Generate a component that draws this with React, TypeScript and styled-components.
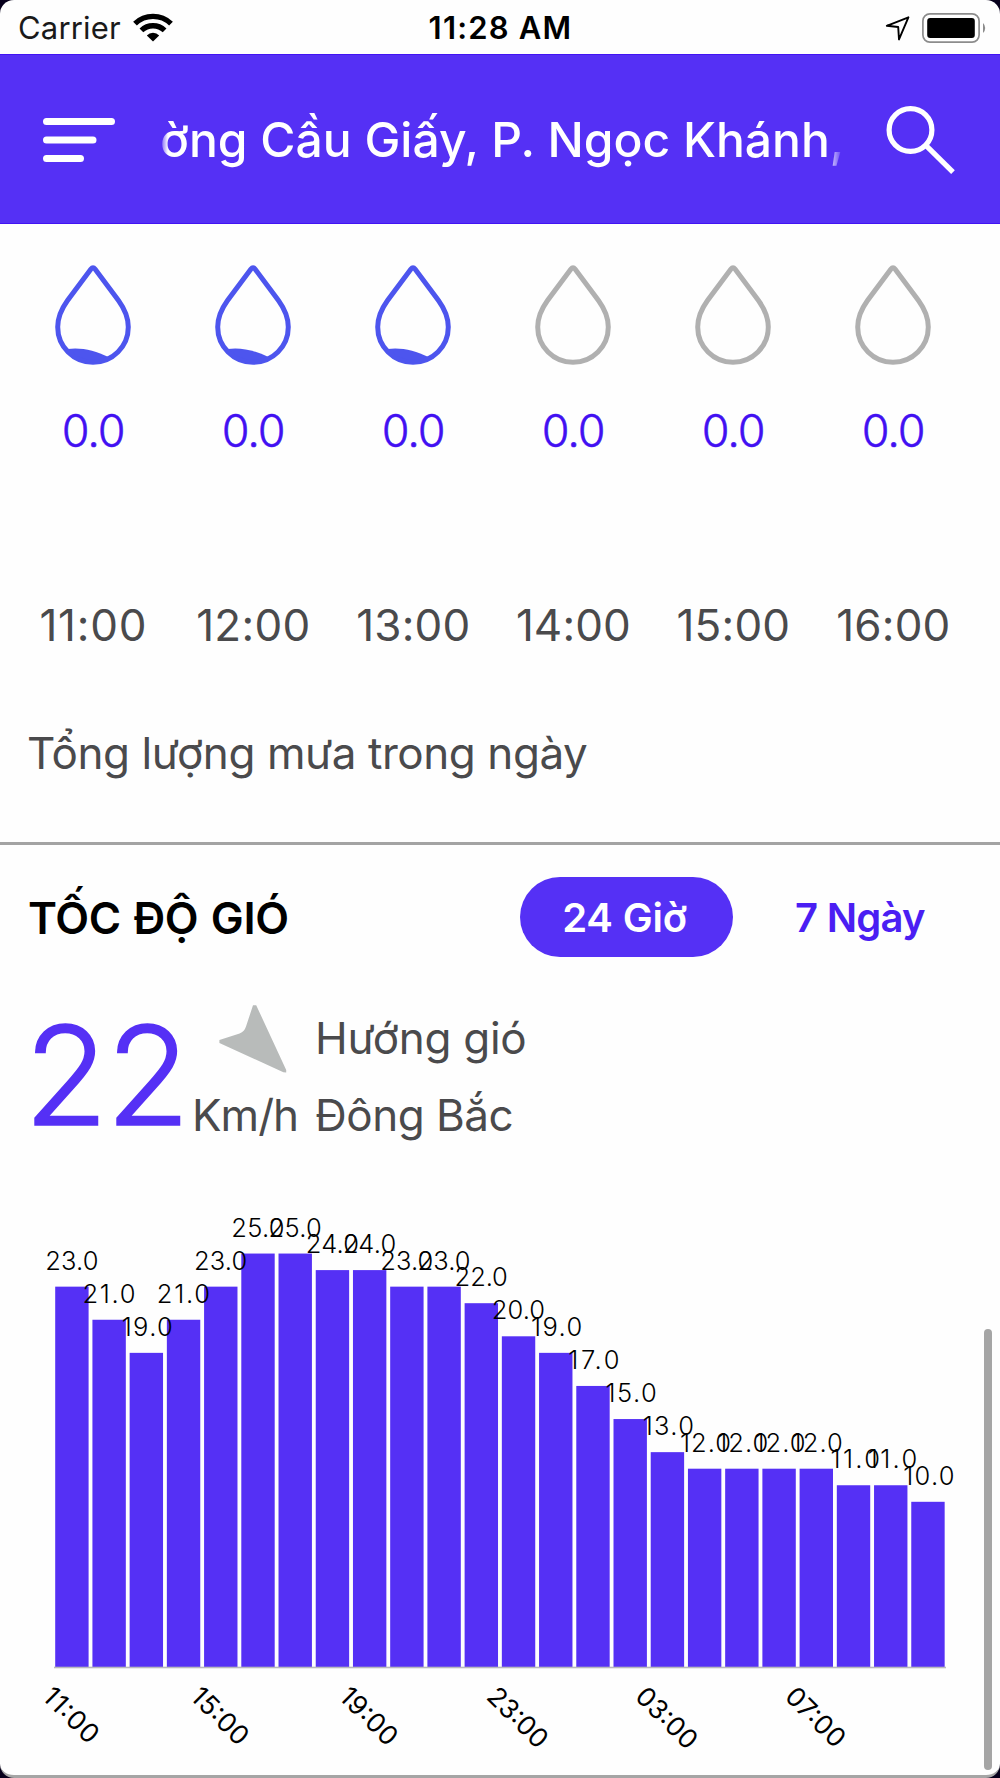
import React from 'react';
import styled, { createGlobalStyle } from 'styled-components';

const PURPLE = '#5530f5';
const DROP_BLUE = '#4d55ee';
const INK = '#4a4a4c';

const GlobalStyle = createGlobalStyle`
  * { box-sizing: border-box; }
  body { margin: 0; background: #07001c; }
`;

const Screen = styled.main`
  display: flex;
  flex-direction: column;
  position: relative;
  width: 1000px;
  height: 1778px;
  overflow: hidden;
  border-radius: 14px;
  border-bottom: 3px solid #a5a5a5;
  background: #fefefe;
  font-family: Inter, "Noto Sans", sans-serif;
  color: ${INK};
`;

/* ---------- status bar ---------- */

const StatusBar = styled.div`
  display: grid;
  grid-template-columns: 1fr auto 1fr;
  align-items: center;
  height: 54px;
  padding: 0 14px 0 18px;
  color: #000;
`;

const StatusLeft = styled.div`
  display: flex;
  align-items: center;
  gap: 12px;
`;

const StatusRight = styled.div`
  display: flex;
  align-items: center;
  justify-content: flex-end;
  gap: 12px;
`;

const Carrier = styled.span`
  font-size: 31px;
  line-height: 55px;
  letter-spacing: 0.18px;
  color: #1a1a1a;
`;

const Clock = styled.span`
  padding-right: 3px;
  font-size: 31px;
  line-height: 55px;
  font-weight: 600;
  letter-spacing: 1.2px;
`;

/* ---------- header ---------- */

const Header = styled.header`
  display: flex;
  align-items: center;
  height: 170px;
  padding: 2px 43px 0;
  border: solid #4213f3;
  border-width: 1px 0;
  background: ${PURPLE};
`;

const IconButton = styled.button`
  display: block;
  padding: 0;
  border: 0;
  background: none;
  line-height: 0;
`;

const Marquee = styled.div`
  width: 692px;
  margin: 0 35px 0 44px;
  padding-left: 1px;
  overflow: hidden;
  white-space: nowrap;
  font-size: 48px;
  font-weight: 500;
  line-height: 100px;
  letter-spacing: 0;
  color: #fff;
  mask-image: linear-gradient(90deg, transparent, #000 9px, #000 668px, transparent 684px);
`;

/* ---------- rain ---------- */

const RainSection = styled.section`
  display: flex;
  flex-direction: column;
  height: 621px;
  padding-top: 41px;
  border-bottom: 3px solid #a3a3a3;
`;

const HourGrid = styled.div`
  display: grid;
  grid-template-columns: repeat(6, 160px);
  margin-left: 13.4px;
`;

const HourCell = styled.div`
  display: flex;
  flex-direction: column;
  align-items: center;
  font-size: 44px;
`;

const RainValue = styled.span`
  margin-top: 36px;
  font-size: 45px;
  font-weight: 300;
  line-height: 60px;
  letter-spacing: -1.1px;
  text-indent: -0.5px;
  color: #4210f2;
  -webkit-text-stroke: 0.5px #4210f2;
`;

const HourLabel = styled.span<{ $tracking: number }>`
  margin-top: 134px;
  line-height: 60px;
  letter-spacing: ${(p) => p.$tracking}px;
`;

const RainTotal = styled.p`
  margin: 68px 0 0 27px;
  font-size: 44px;
  line-height: 60px;
  letter-spacing: -0.44px;
`;

/* ---------- wind ---------- */

const WindSection = styled.section`
  display: flex;
  flex-direction: column;
`;

const WindHeader = styled.div`
  display: flex;
  align-items: center;
  height: 80px;
  margin-top: 32px;
  padding-left: 28px;
`;

const WindTitle = styled.h2`
  width: 492px;
  margin: 2px 0 0;
  font-size: 44px;
  line-height: 60px;
  font-weight: 600;
  letter-spacing: -0.4px;
  word-spacing: 2px;
  color: #000;
`;

const RangeTab = styled.button<{ $active?: boolean }>`
  width: ${(p) => (p.$active ? 213 : 254)}px;
  height: 80px;
  padding: 1px ${(p) => (p.$active ? 4 : 0)}px 0 0;
  border: 0;
  border-radius: 40px;
  background: ${(p) => (p.$active ? PURPLE : 'transparent')};
  color: ${(p) => (p.$active ? '#fff' : '#4a1ef3')};
  font: 600 40px/79px Inter, sans-serif;
  letter-spacing: ${(p) => (p.$active ? -0.2 : -0.76)}px;
`;

const WindNow = styled.div`
  display: flex;
  align-items: flex-start;
  height: 223px;
  padding: 48px 0 0 24px;
`;

const WindSpeed = styled.span`
  width: 168px;
  margin-top: -10px;
  font-size: 137px;
  font-weight: 300;
  line-height: 160px;
  letter-spacing: -2px;
  color: ${PURPLE};
  -webkit-text-stroke: 1.6px ${PURPLE};
`;

const WindColumn = styled.div<{ $width: number }>`
  display: flex;
  flex-direction: column;
  width: ${(p) => p.$width}px;
  font-size: 44px;
  white-space: nowrap;
`;

const ArrowBox = styled.div`
  height: 80px;
  padding-left: 26.5px;
  line-height: 0;
`;

const WindText = styled.span<{ $tracking: number; $top?: number }>`
  margin-top: ${(p) => p.$top ?? 0}px;
  line-height: 60px;
  letter-spacing: ${(p) => p.$tracking}px;
`;

const Chart = styled.svg`
  display: block;
  width: 1000px;
  height: 595px;
`;

const BarLabel = styled.text`
  font: 300 25.5px Inter, sans-serif;
  fill: #000;
`;

const AxisLabel = styled.text`
  font: 400 26.5px Inter, sans-serif;
  fill: #000;
`;

const ScrollThumb = styled.div`
  position: absolute;
  top: 1329px;
  right: 8px;
  width: 8px;
  height: 441px;
  border-radius: 4px;
  background: #a5a5a5;
`;

/* ---------- icons ---------- */

const WifiIcon = () => (
  <svg width="40" height="29" viewBox="0 0 40 29">
    <g fill="none" stroke="#000" strokeWidth="5.4">
      <path d="M2 10.6 A26 26 0 0 1 38 10.6" />
      <path d="M8.4 17.4 A16.8 16.8 0 0 1 31.6 17.4" />
    </g>
    <path d="M20 28.6 L13.8 22.4 A8.8 8.8 0 0 1 26.2 22.4 Z" />
  </svg>
);

const LocationIcon = () => (
  <svg width="25" height="26" viewBox="0 0 25 26">
    <path
      d="M1.8 10.8 L23.4 2.3 L14 24.4 L13.2 12 Z"
      fill="none"
      stroke="#000"
      strokeWidth="1.9"
      strokeLinejoin="round"
    />
  </svg>
);

const BatteryIcon = () => (
  <svg width="64" height="30" viewBox="0 0 64 30">
    <rect x="0.9" y="0.9" width="56.2" height="28.2" rx="7" fill="none" stroke="#8c8c8c" strokeWidth="1.7" />
    <rect x="5.2" y="5" width="47.6" height="20" rx="3" />
    <path d="M61 10 Q63.2 12 63.2 15 Q63.2 18 61 20 Z" fill="#8c8c8c" />
  </svg>
);

const MenuIcon = () => (
  <svg width="72" height="46" viewBox="0 0 72 46" stroke="#fff" strokeWidth="7" strokeLinecap="round">
    <path d="M3.5 4.5 H68.5 M3.5 23 H50 M3.5 41.5 H37.5" />
  </svg>
);

const SearchIcon = () => (
  <svg width="70" height="70" viewBox="0 0 70 70" fill="none" stroke="#fff" strokeWidth="5.2">
    <circle cx="24.5" cy="25" r="21.4" />
    <path d="M39.6 40.2 L67 67.2" />
  </svg>
);

const DropIcon = ({ wet }: { wet: boolean }) => {
  const color = wet ? DROP_BLUE : '#b0b0b0';
  return (
    <svg width="76" height="100" viewBox="0 0 76 100">
      {wet && <path d="M12.5 84 C26 82 40 85.5 53.5 92 C44 100 26 101 12.5 84 Z" fill={color} />}
      <path
        d="M36 4 Q38 1.4 40 4 L63.5 35.5 C70 44.5 73.3 53 73.3 62 A35.3 35.3 0 0 1 2.7 62 C2.7 53 6 44.5 12.5 35.5 Z"
        fill="none"
        stroke={color}
        strokeWidth="5"
        strokeLinejoin="round"
      />
    </svg>
  );
};

const WindArrow = () => (
  <svg width="68" height="68" viewBox="0 0 68 68">
    <path d="M34 0.2 L37.2 0.2 L67.2 65 L67.2 67.4 L64.4 67.2 L0.4 38 L0.4 35 L20.6 28.6 Q25.6 26.4 27 21.6 Z" fill="#b8bbba" />
  </svg>
);

/* ---------- data ---------- */

const hours = [
  { time: '11:00', wet: true, tracking: 0.8 },
  { time: '12:00', wet: true, tracking: 0.3 },
  { time: '13:00', wet: true, tracking: 0.2 },
  { time: '14:00', wet: false, tracking: 0.1 },
  { time: '15:00', wet: false, tracking: 0.2 },
  { time: '16:00', wet: false, tracking: 0.2 },
];

const speeds = [
  23, 21, 19, 21, 23, 25, 25, 24, 24, 23, 23, 22, 20, 19, 17, 15, 13, 12, 12, 12, 12, 11, 11, 10,
];

const axis = [
  { index: 0, label: '11:00', length: 67 },
  { index: 4, label: '15:00', length: 69.5 },
  { index: 8, label: '19:00', length: 70 },
  { index: 12, label: '23:00', length: 73.5 },
  { index: 16, label: '03:00', length: 75 },
  { index: 20, label: '07:00', length: 72.5 },
];

const PITCH = 37.22;
const UNIT = 16.55;
const BASE = 487.3;

// The figure 1 is narrow, so labels that begin with it take less room.
const labelLength = (v: number) => (v === 11 ? 49.5 : v < 20 ? 51.2 : 53.2);

const WindChart = () => (
  <Chart viewBox="0 0 1000 595">
    {speeds.map((v, i) => (
      <rect key={i} x={55.2 + i * PITCH} y={BASE - v * UNIT} width={33.4} height={v * UNIT} fill={PURPLE} />
    ))}
    <rect x="54" y={BASE - 0.6} width="892" height="1.6" fill="#b9b9bd" />
    {speeds.map((v, i) => (
      <BarLabel
        key={i}
        x={98.4 + i * PITCH}
        y={BASE - v * UNIT - 17}
        textAnchor="end"
        textLength={labelLength(v)}
      >
        {v.toFixed(1)}
      </BarLabel>
    ))}
    {axis.map(({ index, label, length }) => {
      const cx = 72 + index * PITCH;
      const reach = (length - 18.9) * 0.3536;
      return (
        <AxisLabel
          key={label}
          textLength={length}
          transform={`translate(${cx - reach - 14} 518) rotate(45)`}
        >
          {label}
        </AxisLabel>
      );
    })}
  </Chart>
);

export default function App() {
  return (
    <>
      <GlobalStyle />
      <Screen>
        <StatusBar>
          <StatusLeft>
            <Carrier>Carrier</Carrier>
            <WifiIcon />
          </StatusLeft>
          <Clock>11:28 AM</Clock>
          <StatusRight>
            <LocationIcon />
            <BatteryIcon />
          </StatusRight>
        </StatusBar>

        <Header>
          <IconButton aria-label="Menu">
            <MenuIcon />
          </IconButton>
          <Marquee>ờng Cầu Giấy, P. Ngọc Khánh,</Marquee>
          <IconButton aria-label="Search">
            <SearchIcon />
          </IconButton>
        </Header>

        <RainSection>
          <HourGrid>
            {hours.map((h) => (
              <HourCell key={h.time}>
                <DropIcon wet={h.wet} />
                <RainValue>0.0</RainValue>
                <HourLabel $tracking={h.tracking}>{h.time}</HourLabel>
              </HourCell>
            ))}
          </HourGrid>
          <RainTotal>Tổng lượng mưa trong ngày</RainTotal>
        </RainSection>

        <WindSection>
          <WindHeader>
            <WindTitle>TỐC ĐỘ GIÓ</WindTitle>
            <RangeTab $active>24 Giờ</RangeTab>
            <RangeTab>7 Ngày</RangeTab>
          </WindHeader>
          <WindNow>
            <WindSpeed>22</WindSpeed>
            <WindColumn $width={123}>
              <ArrowBox>
                <WindArrow />
              </ArrowBox>
              <WindText $tracking={-0.99}>Km/h</WindText>
            </WindColumn>
            <WindColumn $width={220}>
              <WindText $tracking={-0.3} $top={3}>Hướng gió</WindText>
              <WindText $tracking={-0.5} $top={17}>Đông Bắc</WindText>
            </WindColumn>
          </WindNow>
          <WindChart />
        </WindSection>
        <ScrollThumb />
      </Screen>
    </>
  );
}
